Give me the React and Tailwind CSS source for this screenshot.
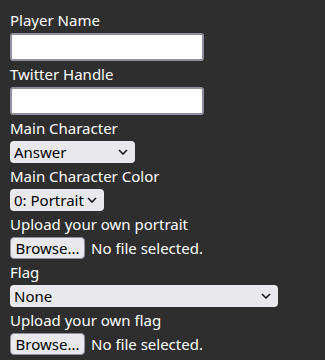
import { useState } from 'react'

function Chevron() {
  return (
    <svg width="10" height="6" viewBox="0 0 10 6" className="pointer-events-none absolute right-[7px] top-1/2 -translate-y-1/2">
      <path d="M1 1 L5 5 L9 1" fill="none" stroke="#1b1b1b" strokeWidth="1.6" />
    </svg>
  )
}

function Select({ width, options, value, onChange }) {
  return (
    <div className="relative" style={{ width }}>
      <select
        value={value}
        onChange={(e) => onChange(e.target.value)}
        className="block w-full h-[22px] appearance-none rounded-[4px] bg-[#e9e9ed] pl-[4px] pr-[18px] text-[15px] leading-[20px] text-black outline-none"
      >
        {options.map((o) => (
          <option key={o} value={o}>{o}</option>
        ))}
      </select>
      <Chevron />
    </div>
  )
}

function FileRow() {
  return (
    <div className="flex items-center h-[22px]">
      <button className="h-[22px] w-[75px] rounded-[4px] border border-[#8f8f9d] bg-[#e9e9ed] text-[15px] leading-[18px] text-black">Browse...</button>
      <span className="ml-[6px] text-[15px] text-white">No file selected.</span>
    </div>
  )
}

function Label({ children }) {
  return <div className="h-[26px] pt-[3px] text-[15px] leading-[21px] text-white">{children}</div>
}

export default function App() {
  const [name, setName] = useState('')
  const [handle, setHandle] = useState('')
  const [character, setCharacter] = useState('Answer')
  const [color, setColor] = useState('0: Portrait')
  const [flag, setFlag] = useState('None')

  return (
    <div className="min-h-[360px] bg-[#2e2e2e] px-[10px] pt-[7px] font-['Segoe_UI','Noto_Sans',sans-serif]">
      <Label>Player Name</Label>
      <input
        value={name}
        onChange={(e) => setName(e.target.value)}
        className="block w-[194px] h-[28px] rounded-[3px] border-2 border-[#8f8f9d] bg-white px-1 text-[15px] outline-none"
      />
      <Label>Twitter Handle</Label>
      <input
        value={handle}
        onChange={(e) => setHandle(e.target.value)}
        className="block w-[194px] h-[28px] rounded-[3px] border-2 border-[#8f8f9d] bg-white px-1 text-[15px] outline-none"
      />
      <Label>Main Character</Label>
      <Select width={125} options={['Answer']} value={character} onChange={setCharacter} />
      <Label>Main Character Color</Label>
      <Select width={94} options={['0: Portrait']} value={color} onChange={setColor} />
      <Label>Upload your own portrait</Label>
      <FileRow />
      <Label>Flag</Label>
      <Select width={268} options={['None']} value={flag} onChange={setFlag} />
      <Label>Upload your own flag</Label>
      <FileRow />
    </div>
  )
}
